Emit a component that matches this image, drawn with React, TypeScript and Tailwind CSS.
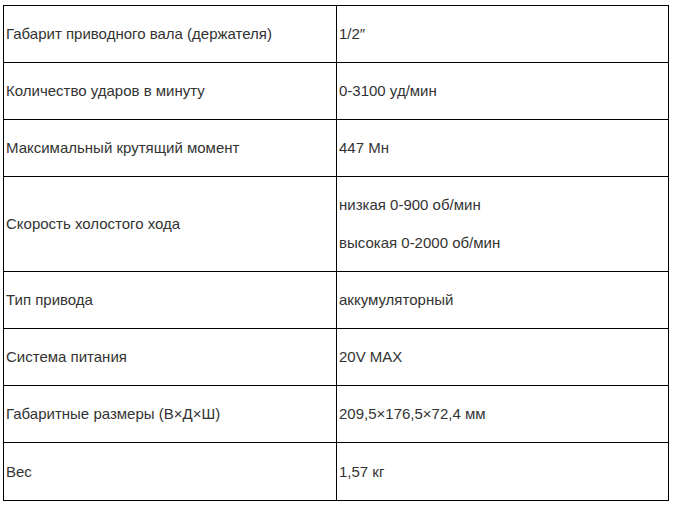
const ROWS: { label: string; value: string[]; h: string }[] = [
  { label: 'Габарит приводного вала (держателя)', value: ['1/2″'], h: 'h-[57px]' },
  { label: 'Количество ударов в минуту', value: ['0-3100 уд/мин'], h: 'h-[57px]' },
  { label: 'Максимальный крутящий момент', value: ['447 Мн'], h: 'h-[57px]' },
  { label: 'Скорость холостого хода', value: ['низкая 0-900 об/мин', 'высокая 0-2000 об/мин'], h: 'h-[95px]' },
  { label: 'Тип привода', value: ['аккумуляторный'], h: 'h-[57px]' },
  { label: 'Система питания', value: ['20V MAX'], h: 'h-[57px]' },
  { label: 'Габаритные размеры (В×Д×Ш)', value: ['209,5×176,5×72,4 мм'], h: 'h-[57px]' },
  { label: 'Вес', value: ['1,57 кг'], h: 'h-[58px]' },
];

export default function App() {
  return (
    <div className="min-h-[506px] bg-white pl-[3px] pt-[5px] font-['Liberation_Sans',Arial,sans-serif] text-[15px] leading-[20px] text-[#333]">
      <div className="w-[666px] border-l border-t border-black">
        {ROWS.map((row) => (
          <div key={row.label} className={`flex ${row.h}`}>
            <div className="flex w-[333px] items-center border-b border-r border-black pl-[2px]">
              {row.label}
            </div>
            <div className="flex flex-1 flex-col justify-center gap-[18px] border-b border-r border-black pl-[2px]">
              {row.value.map((v) => (
                <span key={v}>{v}</span>
              ))}
            </div>
          </div>
        ))}
      </div>
    </div>
  );
}
